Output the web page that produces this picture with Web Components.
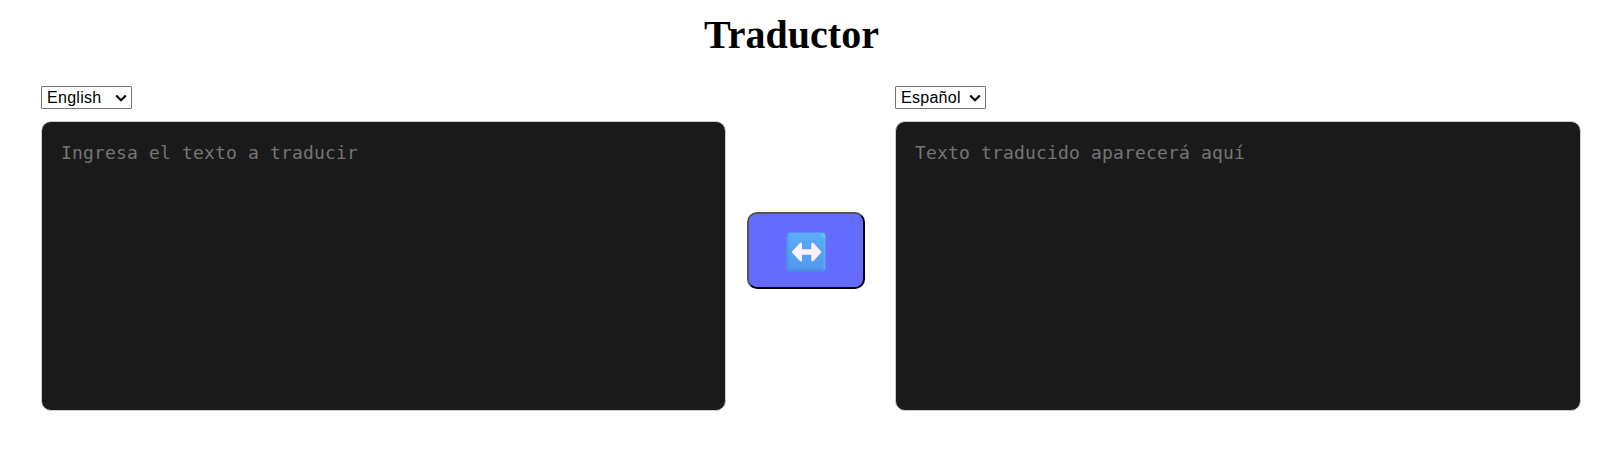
<!DOCTYPE html>
<html lang="es">
<head>
<meta charset="utf-8">
<title>Traductor</title>
<style>
body { margin: 0; background: #fff; font-family: "Liberation Serif", "Times New Roman", serif; color: #000; }
</style>
</head>
<body>
<translator-app></translator-app>
<script>
customElements.define('language-pane', class extends HTMLElement {
  constructor() {
    super();
    this.attachShadow({ mode: 'open' }).innerHTML = `
      <style>
        :host { display: flex; flex-direction: column; align-items: flex-start; gap: 12px; min-width: 0; }
        .picker { display: grid; width: 91px; height: 23px; }
        .picker > * { grid-area: 1 / 1; }
        .picker svg { width: 12px; height: 8px; justify-self: end; align-self: center; margin: 1px 5px 0 0; pointer-events: none; }
        select { appearance: none; box-sizing: border-box; width: 91px; height: 23px; margin: 0; padding: 0 0 0 5px; font: 16px/21px "Liberation Sans", Arial, sans-serif; letter-spacing: .28px; color: #000; background: #fff; border: 1px solid #767676; border-radius: 1px; }
        textarea { box-sizing: border-box; display: block; width: 100%; height: 290px; margin: 0; padding: 19px; resize: none; border: 1px solid #ccc; border-radius: 10px; background: #1a1a1a; color: #fff; font: 18px/23px "DejaVu Sans Mono", monospace; letter-spacing: .159px; outline: none; }
        textarea::placeholder { color: #757575; opacity: 1; }
      </style>
      <div class="picker">
        <select><option></option></select>
        <svg viewBox="0 0 12 8"><path d="M1.2 1.5L6 6.3l4.8-4.8" fill="none" stroke="#000" stroke-width="2.1"/></svg>
      </div>
      <textarea></textarea>`;
    this.shadowRoot.querySelector('option').textContent = this.getAttribute('language');
    this.shadowRoot.querySelector('textarea').placeholder = this.getAttribute('placeholder');
  }
});

customElements.define('swap-button', class extends HTMLElement {
  constructor() {
    super();
    this.attachShadow({ mode: 'open' }).innerHTML = `
      <style>
        :host { display: block; }
        button { box-sizing: border-box; display: flex; align-items: center; justify-content: center; width: 118px; height: 77px; margin: 0; padding: 3px 0 0; border: 2px outset #000; border-radius: 10px; background: #646cff; }
        svg { display: block; width: 40px; height: 40px; }
      </style>
      <button type="button" aria-label="Intercambiar idiomas">
        <svg viewBox="0 0 40 40">
          <defs>
            <linearGradient id="face" x1="0" y1="0" x2="0" y2="1">
              <stop offset="0" stop-color="#5caefc"/><stop offset="1" stop-color="#5097ed"/>
            </linearGradient>
            <linearGradient id="left" x1="0" y1="0" x2="1" y2="0">
              <stop offset="0" stop-color="#3d85c7" stop-opacity=".85"/><stop offset="1" stop-color="#4795df" stop-opacity="0"/>
            </linearGradient>
            <linearGradient id="bottom" x1="0" y1="1" x2="0" y2="0">
              <stop offset="0" stop-color="#4a83d4" stop-opacity=".8"/><stop offset="1" stop-color="#4a83d4" stop-opacity="0"/>
            </linearGradient>
            <radialGradient id="shine"><stop offset="0" stop-color="#69c5ff"/><stop offset="1" stop-color="#69c5ff" stop-opacity="0"/></radialGradient>
            <clipPath id="tile"><rect x=".5" y=".5" width="39" height="39" rx="4"/></clipPath>
          </defs>
          <g clip-path="url(#tile)">
            <rect width="40" height="40" fill="url(#face)"/>
            <rect width="4" height="40" fill="url(#left)"/>
            <rect y="36" width="40" height="4" fill="url(#bottom)"/>
            <rect x="37.5" width="2" height="40" fill="#65b7fc" opacity=".5"/>
            <circle cx="37" cy="3" r="4" fill="url(#shine)"/>
          </g>
          <path d="M6.3 19.2 13.6 11.2Q16 9.2 16 12.2V17.2H25.3V12.2Q25.3 9.2 27.7 11.2L35 19.2Q35.7 20 35 20.8L27.7 28.8Q25.3 30.8 25.3 27.8V22.8H16V27.8Q16 30.8 13.6 28.8L6.3 20.8Q5.6 20 6.3 19.2Z" fill="#fcf1ff"/>
        </svg>
      </button>`;
  }
});

customElements.define('translator-app', class extends HTMLElement {
  constructor() {
    super();
    this.attachShadow({ mode: 'open' }).innerHTML = `
      <style>
        :host { display: block; box-sizing: border-box; height: 471px; padding: 12px 37px 0 41px; }
        h1 { margin: 0 39px 28px 0; font-size: 40px; line-height: 46px; font-weight: bold; text-align: center; }
        main { display: grid; grid-template-columns: 685px 118px 686px; column-gap: 21px; }
        swap-button { margin-top: 126px; }
        language-pane:last-child { margin-left: 9px; width: 686px; }
      </style>
      <h1>Traductor</h1>
      <main>
        <language-pane language="English" placeholder="Ingresa el texto a traducir"></language-pane>
        <swap-button></swap-button>
        <language-pane language="Español" placeholder="Texto traducido aparecerá aquí"></language-pane>
      </main>`;
  }
});
</script>
</body>
</html>
